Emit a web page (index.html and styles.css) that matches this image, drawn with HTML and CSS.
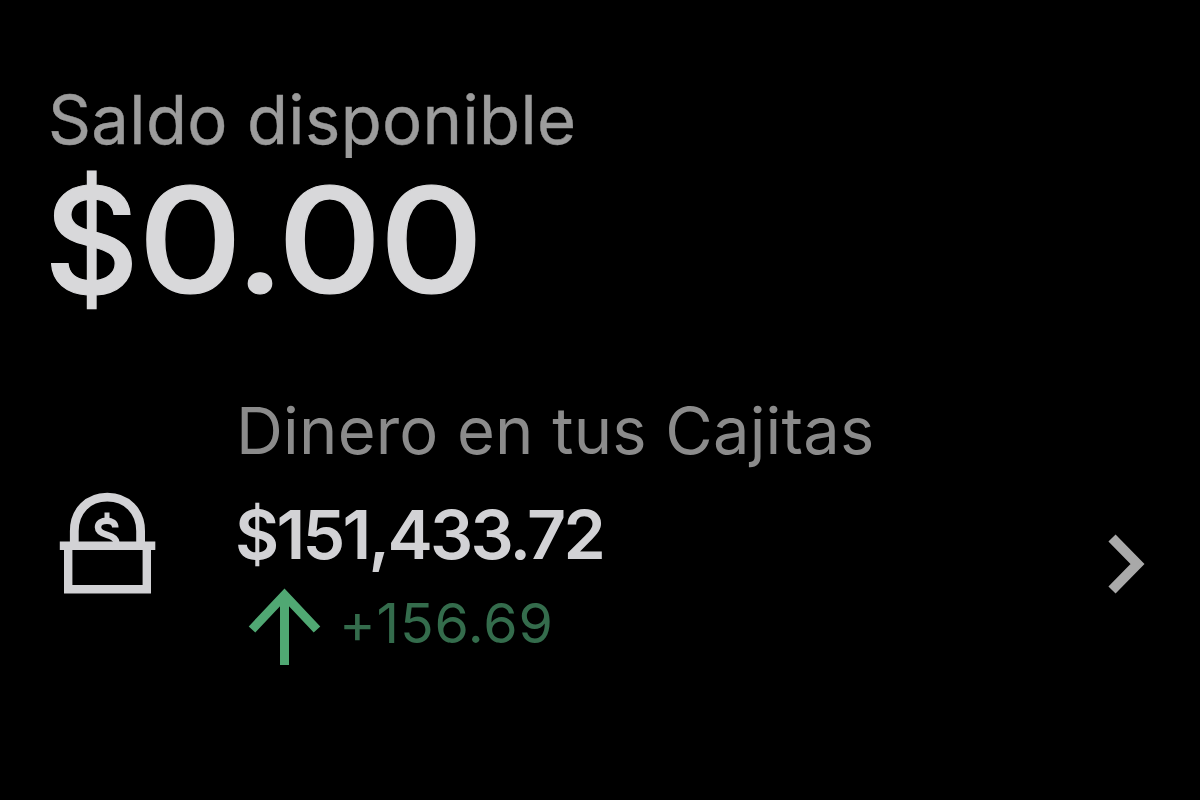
FILE: index.html
```html
<!DOCTYPE html>
<html lang="es">
<head>
<meta charset="utf-8">
<title>Saldo</title>
<link rel="stylesheet" href="styles.css">
</head>
<body>
<main class="account">
  <section class="balance">
    <div class="balance-label">Saldo disponible</div>
    <div class="balance-amount"><span class="currency">$</span><span class="digits">0.00</span></div>
  </section>
  <section class="savings">
    <svg class="box-icon" viewBox="0 0 120 125" width="120" height="125" fill="none" stroke="#d2d2d5">
      <path d="M24.3 63V51C24.3 31 38 17.2 57.3 17.2S90.600 31 90.600 51V63" stroke-width="8.800"/>
      <path d="M9.800 65.800H105.300" stroke-width="8.600"/>
      <path d="M18.200 66V109.300H96.800V66" stroke-width="8.400"/>
      <path d="M65.300 47.500C65.300 43.500 62 40.800 57 40.800C51.500 40.800 48 43 48 47.200C48 51.500 51.500 53.200 57 54.800C62.500 56.300 66.500 58.500 66.500 63" stroke-width="6.500"/>
      <path d="M57 32.500V40" stroke-width="5"/>
    </svg>
    <div class="savings-info">
      <div class="savings-label">Dinero en tus Cajitas</div>
      <div class="savings-amount">$151,433.72</div>
      <div class="gain">
        <svg class="arrow-icon" viewBox="0 0 76 80" width="76" height="80" fill="none" stroke="#50a873" stroke-width="9">
          <path d="M38.500 78V10M6 42.500L38.500 8L71 42.500"/>
        </svg>
        <span class="gain-value">+156.69</span>
      </div>
    </div>
    <svg class="chevron" viewBox="0 0 40 62" width="40" height="62" fill="none" stroke="#a9a9a9" stroke-width="10">
      <path d="M4 5L29.500 31L4 57"/>
    </svg>
  </section>
</main>
</body>
</html>
```
FILE: styles.css
```css
body {
  margin: 0;
  background: #000;
  font-family: Inter, "Liberation Sans", sans-serif;
  font-kerning: normal;
}

.account {
  box-sizing: border-box;
  width: 1200px;
  height: 800px;
  padding: 80px 50px 0;
  overflow: hidden;
  white-space: nowrap;
}

.balance-label {
  margin-left: -2px;
  font-size: 67px;
  line-height: 80px;
  letter-spacing: 0.35px;
  color: #9c9c9c;
  -webkit-text-stroke: 0.4px #9c9c9c;
}

.balance-amount {
  display: flex;
  margin-top: 5px;
  margin-left: -6px;
  font-size: 147px;
  line-height: 150px;
  font-weight: 500;
  color: #d8d8da;
  -webkit-text-stroke: 1.2px #d8d8da;
}

.digits {
  transform: scaleX(1.1);
  transform-origin: left;
  margin-left: -1px;
  letter-spacing: -2.4px;
}

.savings {
  display: flex;
  align-items: flex-start;
  margin-top: 78px;
}

.box-icon {
  flex: none;
  margin-top: 87px;
}

.savings-info {
  flex: 1;
  margin-left: 65px;
}

.savings-label {
  margin-left: 1px;
  font-size: 65px;
  line-height: 76px;
  letter-spacing: 0.2px;
  color: #8b8b8b;
}

.savings-amount {
  margin-top: 25px;
  font-size: 68px;
  line-height: 80px;
  font-weight: 600;
  letter-spacing: -2.75px;
  color: #d2d2d5;
}

.gain {
  display: flex;
  align-items: flex-start;
  margin-top: 9px;
}

.arrow-icon {
  flex: none;
  margin: 4px 0 0 11px;
}

.gain-value {
  margin-left: 17px;
  font-size: 55.5px;
  line-height: 80px;
  letter-spacing: 0.8px;
  color: #346c4c;
}

.chevron {
  flex: none;
  margin: 140px 2px 0 0;
}
```
